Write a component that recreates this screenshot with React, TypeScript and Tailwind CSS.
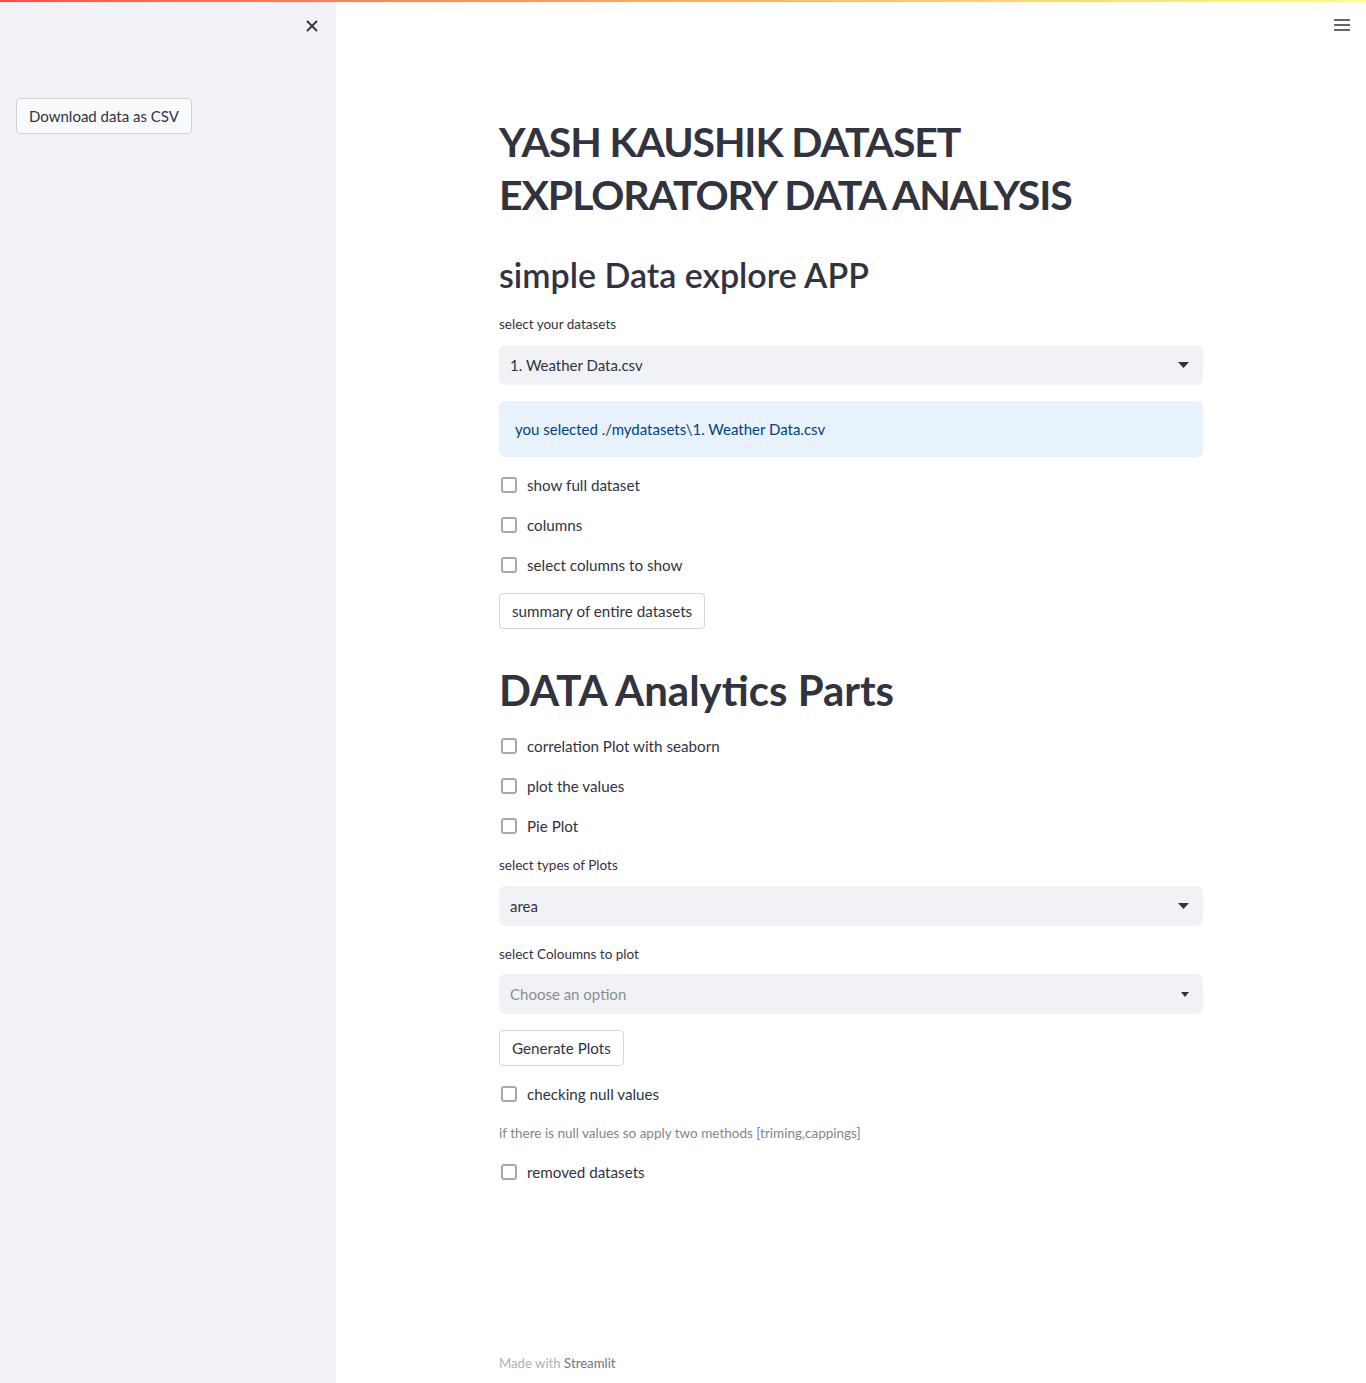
import React from "react";

const font = { fontFamily: "Lato, 'Noto Sans', sans-serif" };

function Checkbox({ label }: { label: string }) {
  return (
    <div className="flex items-center h-[24px]">
      <div className="w-4 h-4 ml-[2px] rounded-[3px] border-2 border-[#a3a8b4] bg-white" />
      <span className="ml-[10px] text-[15.2px] text-[#31333f]">{label}</span>
    </div>
  );
}

function Select({ value, placeholder }: { value: string; placeholder?: boolean }) {
  return (
    <div className="h-10 rounded-[6px] bg-[#f0f2f6] flex items-center justify-between pl-[11px] pr-[14px]">
      <span className={placeholder ? "text-[15px] text-[#8b8d95]" : "text-[15px] text-[#31333f]"}>{value}</span>
      {placeholder ? (
        <svg width="8" height="5" viewBox="0 0 8 5"><path d="M0 0h8L4 5z" fill="#31333f" /></svg>
      ) : (
        <svg width="11" height="6" viewBox="0 0 11 6"><path d="M0 0h11L5.5 6z" fill="#31333f" /></svg>
      )}
    </div>
  );
}

function Button({ label }: { label: string }) {
  return (
    <div className="inline-flex h-9 items-center px-3 rounded-[4px] border border-[#d5d6d9] bg-white text-[15.2px] text-[#31333f]">
      {label}
    </div>
  );
}

export default function App() {
  return (
    <div className="relative w-[1366px] h-[1383px] bg-white overflow-hidden" style={font}>
      <div className="absolute top-0 left-0 right-0 h-[2px] bg-gradient-to-r from-[#ff4b4b] to-[#fffd80] z-10" />
      <div className="flex h-full">
        <aside className="w-[336px] shrink-0 bg-[#f0f2f6] h-full relative">
          <div className="flex justify-end pt-[19px] pr-[17px]">
            <svg width="14" height="14" viewBox="0 0 14 14">
              <path d="M2 2L12 12M12 2L2 12" stroke="#31333f" strokeWidth="1.8" />
            </svg>
          </div>
          <div className="pl-4 mt-[65px]">
            <div className="inline-flex h-9 items-center px-3 rounded-[4px] border border-[#d3d5da] bg-[#f9fafb] text-[15px] text-[#31333f]">
              Download data as CSV
            </div>
          </div>
        </aside>
        <main className="flex-1 relative">
          <div className="absolute right-[16px] top-[19px]">
            <svg width="16" height="12" viewBox="0 0 16 12">
              <path d="M0 1h16M0 6h16M0 11h16" stroke="#31333f" strokeWidth="1.6" />
            </svg>
          </div>
          <div className="w-[704px] mx-auto pt-[115px] flex flex-col text-[#31333f]">
            <h1 className="text-[41px] font-bold leading-[53px] tracking-[-1.1px]">
              YASH KAUSHIK DATASET EXPLORATORY DATA ANALYSIS
            </h1>
            <h2 className="mt-[30px] text-[34px] font-semibold leading-[48px]">simple Data explore APP</h2>
            <div className="mt-[15px] text-[13.5px] leading-[20px]">select your datasets</div>
            <div className="mt-[11px]">
              <Select value="1. Weather Data.csv" />
            </div>
            <div className="mt-4 h-[56px] rounded-[6px] bg-[#e8f2fc] flex items-center px-4 text-[15px] text-[#004280]">
              you selected ./mydatasets\1. Weather Data.csv
            </div>
            <div className="mt-[16px] flex flex-col gap-4">
              <Checkbox label="show full dataset" />
              <Checkbox label="columns" />
              <Checkbox label="select columns to show" />
            </div>
            <div className="mt-[16px]">
              <Button label="summary of entire datasets" />
            </div>
            <h1 className="mt-[34px] text-[42px] font-bold leading-[54px]">DATA Analytics Parts</h1>
            <div className="mt-[17px] flex flex-col gap-4">
              <Checkbox label="correlation Plot with seaborn" />
              <Checkbox label="plot the values" />
              <Checkbox label="Pie Plot" />
            </div>
            <div className="mt-[17px] text-[13.5px] leading-[20px]">select types of Plots</div>
            <div className="mt-[11px]">
              <Select value="area" />
            </div>
            <div className="mt-[18px] text-[13.5px] leading-[20px]">select Coloumns to plot</div>
            <div className="mt-[10px]">
              <Select value="Choose an option" placeholder />
            </div>
            <div className="mt-4">
              <Button label="Generate Plots" />
            </div>
            <div className="mt-[16px]">
              <Checkbox label="checking null values" />
            </div>
            <div className="mt-[17px] text-[13.5px] leading-[20px] text-[#83848b]">
              if there is null values so apply two methods [triming,cappings]
            </div>
            <div className="mt-[17px]">
              <Checkbox label="removed datasets" />
            </div>
            <div className="mt-[169px] text-[13.2px] leading-[20px] text-[#b0b1b6]">
              Made with <span className="text-[#73747c]">Streamlit</span>
            </div>
          </div>
        </main>
      </div>
    </div>
  );
}
